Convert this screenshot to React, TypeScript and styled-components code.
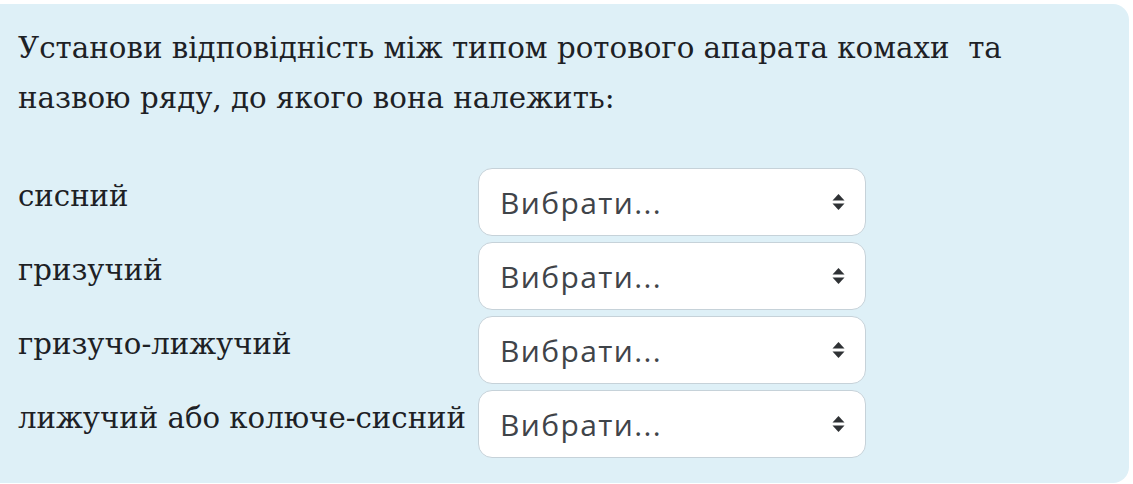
import React from "react";
import styled, { createGlobalStyle } from "styled-components";

const Global = createGlobalStyle`
  html, body { margin: 0; padding: 0; background: #ffffff; }
  body { font-family: "DejaVu Serif", serif; }
`;

const Panel = styled.div`
  margin-top: 4px;
  width: 1129px;
  min-height: 479px;
  box-sizing: border-box;
  background: #def0f7;
  border-radius: 0 16px 16px 0;
  padding: 19px 18px 20px 18px;
  color: #1d2125;
`;

const Question = styled.p`
  margin: 0 0 45px 0;
  font-family: "DejaVu Serif", serif;
  font-size: 29.3px;
  line-height: 50px;
  max-width: 1020px;
`;

const Grid = styled.div`
  display: grid;
  grid-template-columns: 460px 388px;
  row-gap: 6px;
`;

const Label = styled.div`
  font-family: "DejaVu Serif", serif;
  font-size: 29.2px;
  line-height: 40px;
  padding-top: 8px;
  white-space: nowrap;
`;

const SelectWrap = styled.div`
  position: relative;
`;

const Select = styled.select`
  appearance: none;
  -webkit-appearance: none;
  width: 388px;
  height: 68px;
  box-sizing: border-box;
  border: 1px solid #c6d2d9;
  border-radius: 14px;
  background: #ffffff;
  padding: 0 50px 0 21px;
  font-family: "Open Sans", sans-serif;
  font-size: 30px;
  letter-spacing: 1.4px;
  color: #3f4449;
  outline: none;
`;

const Arrows = styled.svg`
  position: absolute;
  right: 21px;
  top: 50%;
  transform: translateY(-50%);
  pointer-events: none;
`;

const rows = [
  "сисний",
  "гризучий",
  "гризучо-лижучий",
  "лижучий або колюче-сисний",
];

export default function App() {
  return (
    <>
      <Global />
      <Panel>
        <Question>
          Установи відповідність між типом ротового апарата комахи&nbsp; та назвою ряду, до якого вона належить:
        </Question>
        <Grid>
          {rows.map((r) => (
            <React.Fragment key={r}>
              <Label>{r}</Label>
              <SelectWrap>
                <Select defaultValue="">
                  <option value="">Вибрати...</option>
                </Select>
                <Arrows width="13" height="18" viewBox="0 0 13 18">
                  <path d="M6.5 1 L12.5 7.5 H0.5 Z" fill="#2f3235" />
                  <path d="M6.5 17 L12.5 10.5 H0.5 Z" fill="#2f3235" />
                </Arrows>
              </SelectWrap>
            </React.Fragment>
          ))}
        </Grid>
      </Panel>
    </>
  );
}
